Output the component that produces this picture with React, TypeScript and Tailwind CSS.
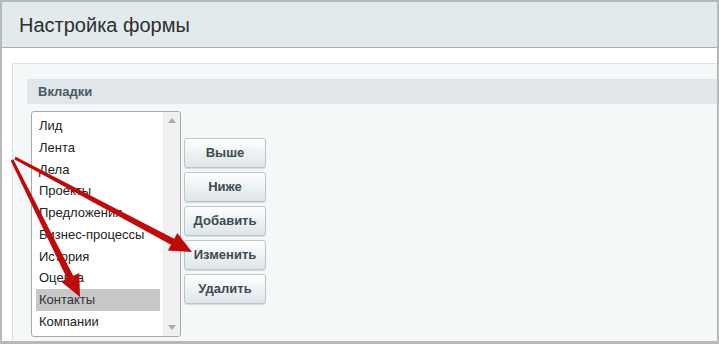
import React from "react";

const items = ["Лид", "Лента", "Дела", "Проекты", "Предложения", "Бизнес-процессы", "История", "Оценка", "Контакты", "Компании"];
const buttons = ["Выше", "Ниже", "Добавить", "Изменить", "Удалить"];

export default function App() {
  return (
    <div
      className="relative w-[719px] h-[344px] overflow-hidden bg-white border-t-2 border-l-2 border-r-2 border-b-[3px] border-[#b9b9b9]"
      style={{ fontFamily: '"Liberation Sans", Arial, sans-serif' }}
    >
      <div className="h-[46px] bg-[#e1eaec] border-b border-[#a9adaf] flex items-center pl-[17px]">
        <span className="text-[20px] text-[#2f2f2f]">Настройка формы</span>
      </div>
      <div className="pt-[15px] pl-[10px]">
        <div className="h-[300px] bg-[#f4f8f9] border-t border-l border-[#dde3ea] pt-[15px] pl-[14px]">
          <div className="h-[25px] bg-[#e0e6e9] flex items-center pl-[11px]">
            <span className="text-[13px] font-bold text-[#4b5a62]">Вкладки</span>
          </div>
          <div className="flex pl-[4px] pt-[7px] gap-[3px]">
            <div className="w-[150px] h-[226px] bg-white border border-[#a9a9a9] rounded-[3px] flex overflow-hidden">
              <div className="flex-1 pt-[3px] pl-[4px] pr-[3px]">
                {items.map((it) => (
                  <div
                    key={it}
                    className={
                      "h-[21.75px] flex items-center pl-[3px] text-[13px] text-[#222] whitespace-nowrap overflow-hidden " +
                      (it === "Контакты" ? "bg-[#c8c8c8] text-[#333]" : "")
                    }
                  >
                    {it}
                  </div>
                ))}
              </div>
              <div className="w-[17px] bg-[#f0f0f0] flex flex-col justify-between items-center py-[6px]">
                <svg width="8" height="5" viewBox="0 0 8 5"><polygon points="4,0 8,5 0,5" fill="#a8a8a8" /></svg>
                <svg width="8" height="5" viewBox="0 0 8 5"><polygon points="0,0 8,0 4,5" fill="#a8a8a8" /></svg>
              </div>
            </div>
            <div className="flex flex-col gap-[4px] pt-[27px]">
              {buttons.map((b) => (
                <div
                  key={b}
                  className="w-[82px] h-[30px] rounded-[3px] border border-[#bcc5c9] bg-gradient-to-b from-[#ffffff] to-[#dde5e8] shadow-[0_1px_1px_rgba(0,0,0,0.12)] flex items-center justify-center text-[13px] font-bold text-[#3d4a52]"
                >
                  {b}
                </div>
              ))}
            </div>
          </div>
        </div>
      </div>
      <svg className="absolute left-[-2px] top-[-2px] pointer-events-none" width="719" height="344" viewBox="0 0 719 344">
        <polygon points="14.3,159.3 15.7,156.7 175.6,239.4 172.4,245.6" fill="#c00a0a" />
        <polygon points="192,252 167.9,250.5 177.3,232.9" fill="#c00a0a" />
        <polygon points="10.7,160.7 13.3,159.3 74.1,277.4 67.9,280.6" fill="#c00a0a" />
        <polygon points="80,297 61.2,281.7 79.2,272.9" fill="#c00a0a" />
      </svg>
    </div>
  );
}
